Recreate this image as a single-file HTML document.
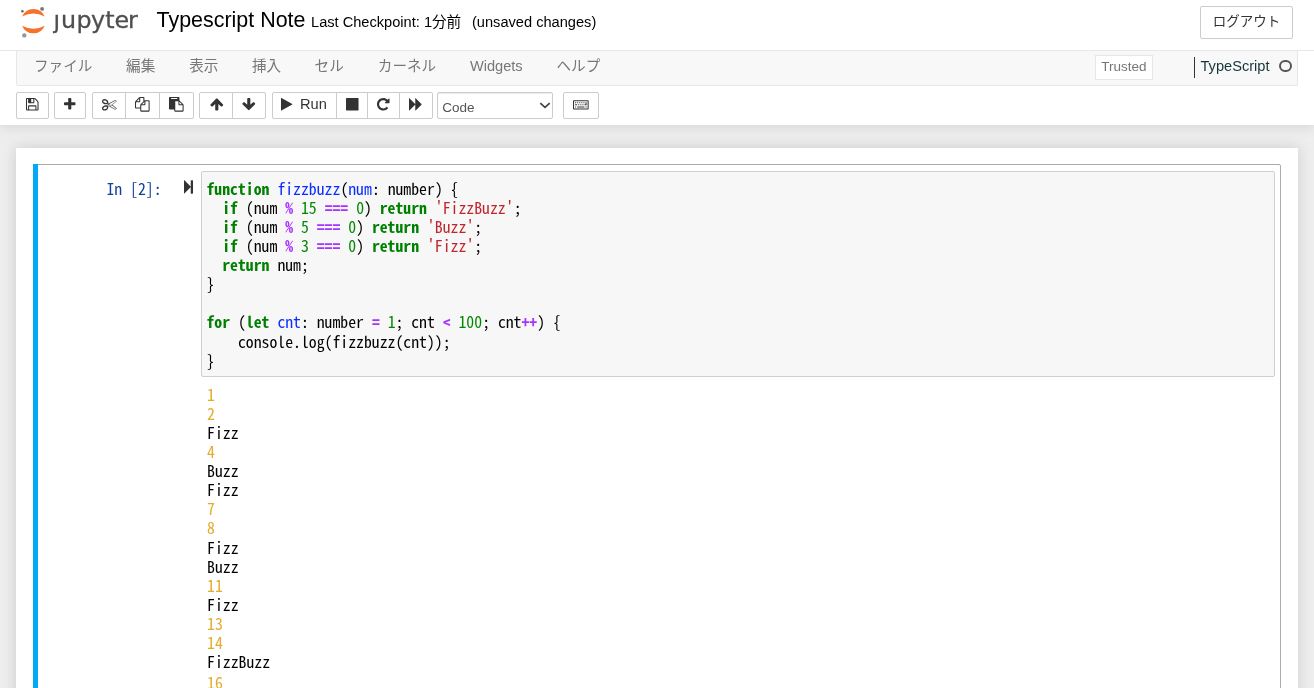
<!DOCTYPE html><html lang="ja"><head><meta charset="utf-8"><title>Typescript Note</title><style>
html,body{margin:0;padding:0}
body{width:1314px;height:688px;overflow:hidden;background:#eee;position:relative;
 font-family:"Liberation Sans","Noto Sans CJK JP",sans-serif;font-size:14.625px;color:#000}
#w{position:absolute;left:0;top:0;width:1314px;height:688px;overflow:hidden;will-change:transform}
.abs{position:absolute;white-space:nowrap}
.ic{position:absolute;display:block;overflow:visible}
#header{position:absolute;left:0;top:0;width:1314px;height:124.8px;background:#fff;
 box-shadow:0 0 13.5px 1.125px rgba(87,87,87,.2);z-index:2}
#hbar{position:absolute;left:0;top:50px;width:1314px;height:1px;background:#e7e7e7}
#menubar{position:absolute;left:16px;top:50px;width:1282px;height:36px;box-sizing:border-box;
 background:#f8f8f8;border:1px solid #e7e7e7;border-top:none;border-radius:0 0 2px 2px}
.mi{position:absolute;top:55.5px;line-height:21px;color:#777;white-space:nowrap;font-size:14.625px}
.btn{position:absolute;box-sizing:border-box;border:1px solid #ccc;background:#fff;top:92.4px;height:26.2px}
#nbc{position:absolute;left:16px;top:148px;width:1282px;height:700px;background:#fff;
 box-shadow:0 0 13.5px 1.125px rgba(87,87,87,.2)}
#cell{position:absolute;left:33px;top:164px;width:1248px;height:700px;box-sizing:border-box;
 border:1px solid #ababab;border-radius:2px;background:#fff}
#bar{position:absolute;left:33px;top:164px;width:5px;height:700px;background:#03a9f4}
.mono{font-family:"Noto Sans Mono CJK JP","Noto Sans Mono CJK SC","Noto Sans Mono CJK TC","Noto Sans Mono CJK KR","Noto Sans Mono CJK HK",monospace;font-size:15.75px;line-height:19.125px}
#inp{position:absolute;left:201px;top:171px;width:1074px;height:206px;box-sizing:border-box;border:1px solid #cfcfcf;
 border-radius:2px;background:#f7f7f7}
pre{margin:0}
#code{position:absolute;left:206.5px;top:178.6px;white-space:pre;color:#000}
#out{position:absolute;left:207.1px;top:384.6px;white-space:pre;color:#000}
.k{color:#008000;font-weight:bold}.d{color:#0a2cff}.v{color:#05a}.o{color:#a733ff;font-weight:bold}.n{color:#080}.s{color:#c0262c}
.y{color:#e2ac2c}
</style></head><body><div id="w">
<div id="nbc"></div><div id="cell"></div><div id="bar"></div>
<div class="abs mono" style="left:106.5px;top:178.6px;color:#12409c">In&nbsp;[2]:</div>
<svg class="ic" style="left:184.30px;top:178.80px" width="9.000" height="15.750" viewBox="0 -1536 1024 1792"><path fill="#333" transform="scale(1,-1)" d="M45 -115 755 595C761 601 765 607 768 614V-64C768 -99 797 -128 832 -128H960C995 -128 1024 -99 1024 -64V1344C1024 1379 995 1408 960 1408H832C797 1408 768 1379 768 1344V666C765 673 761 679 755 685L45 1395C20 1420 0 1411 0 1376V-96C0 -131 20 -140 45 -115Z"/></svg>
<div id="inp"></div>
<pre id="code" class="mono"><span class="k">function</span> <span class="d">fizzbuzz</span>(<span class="d">num</span>: <span class="v0">number</span>) {
  <span class="k">if</span> (<span class="v0">num</span> <span class="o">%</span> <span class="n">15</span> <span class="o">===</span> <span class="n">0</span>) <span class="k">return</span> <span class="s">'FizzBuzz'</span>;
  <span class="k">if</span> (<span class="v0">num</span> <span class="o">%</span> <span class="n">5</span> <span class="o">===</span> <span class="n">0</span>) <span class="k">return</span> <span class="s">'Buzz'</span>;
  <span class="k">if</span> (<span class="v0">num</span> <span class="o">%</span> <span class="n">3</span> <span class="o">===</span> <span class="n">0</span>) <span class="k">return</span> <span class="s">'Fizz'</span>;
  <span class="k">return</span> <span class="v0">num</span>;
}

<span class="k">for</span> (<span class="k">let</span> <span class="d">cnt</span>: <span class="v0">number</span> <span class="o">=</span> <span class="n">1</span>; <span class="v0">cnt</span> <span class="o">&lt;</span> <span class="n">100</span>; <span class="v0">cnt</span><span class="o">++</span>) {
    console.log(fizzbuzz(cnt));
}</pre>
<pre id="out" class="mono"><span class="y">1</span>
<span class="y">2</span>
Fizz
<span class="y">4</span>
Buzz
Fizz
<span class="y">7</span>
<span class="y">8</span>
Fizz
Buzz
<span class="y">11</span>
Fizz
<span class="y">13</span>
<span class="y">14</span>
FizzBuzz
<span style="position:relative;top:1.7px"><span class="y">16</span>
<span class="y">17</span>
Fizz
<span class="y">19</span>
Buzz
Fizz</span></pre>
<div id="header">
<svg class="ic" style="left:0;top:0" width="150" height="44" viewBox="0 0 150 44">
<path fill="#f6722b" d="M22.1 16.5 A12.2 12.2 0 0 1 44.7 16.5 A23.5 23.5 0 0 0 22.1 16.5Z"/>
<path fill="#f6722b" d="M22.1 25.7 A12.2 12.2 0 0 0 44.7 25.7 A23.5 23.5 0 0 1 22.1 25.7Z"/>
<circle cx="42.1" cy="8.9" r="1.9" fill="#767677"/><circle cx="22.4" cy="11.3" r="1.25" fill="#616262"/><circle cx="24.3" cy="35.4" r="2.2" fill="#989798"/>
<text y="28" x="53.6 60.9 76.6 91 105.2 114.4 127.9" font-family="DejaVu Sans, Liberation Sans, sans-serif" font-size="23.8" fill="#4e4e4e" stroke="#4e4e4e" stroke-width="0.3">&#x237;upyter</text>
</svg>
<div class="abs" style="left:156.6px;top:8px;font-size:21.43px;line-height:25px">Typescript Note</div>
<div class="abs" style="left:311px;top:12.5px;line-height:18px">Last Checkpoint: 1分前</div>
<div class="abs" style="left:472px;top:12.5px;line-height:18px">(unsaved changes)</div>
<div class="abs" style="left:1200px;top:6px;width:93px;height:33px;box-sizing:border-box;border:1px solid #ccc;border-radius:2px;color:#333;font-size:13.5px;line-height:29px;text-align:center">ログアウト</div>
<div id="menubar"></div><div id="hbar"></div>
<div class="mi" style="left:34.0px">ファイル</div>
<div class="mi" style="left:126.05px">編集</div>
<div class="mi" style="left:189.15px">表示</div>
<div class="mi" style="left:251.9px">挿入</div>
<div class="mi" style="left:314.6px">セル</div>
<div class="mi" style="left:377.8px">カーネル</div>
<div class="mi" style="left:469.9px">Widgets</div>
<div class="mi" style="left:556.5px">ヘルプ</div>
<div class="abs" style="left:1095px;top:55px;width:58px;height:24.5px;box-sizing:border-box;border:1px solid #e7e7e7;background:#fff;color:#777;font-size:13.5px;line-height:22px;text-align:center">Trusted</div>
<div class="abs" style="left:1194px;top:57px;width:1px;height:20.5px;background:#333"></div>
<div class="abs" style="left:1200.5px;top:55.5px;line-height:21px;color:#15353a">TypeScript</div>
<div class="abs" style="left:1278.9px;top:59.5px;width:12.9px;height:12.9px;box-sizing:border-box;border:2px solid #555;border-radius:50%"></div>
<div class="btn" style="left:16.3px;width:32.50px;border-radius:2px 2px 2px 2px"></div>
<svg class="ic" style="left:26.28px;top:96.50px" width="12.536" height="14.625" viewBox="0 -1536 1536 1792"><path fill="#333" transform="scale(1,-1)" d="M384 0V384H1152V0ZM1280 0V416C1280 469 1237 512 1184 512H352C299 512 256 469 256 416V0H128V1280H256V864C256 811 299 768 352 768H928C981 768 1024 811 1024 864V1280C1044 1280 1083 1264 1097 1250L1378 969C1391 956 1408 915 1408 896V0ZM896 928C896 911 881 896 864 896H672C655 896 640 911 640 928V1248C640 1265 655 1280 672 1280H864C881 1280 896 1265 896 1248V928ZM1536 896C1536 949 1506 1022 1468 1060L1188 1340C1150 1378 1077 1408 1024 1408H96C43 1408 0 1365 0 1312V-32C0 -85 43 -128 96 -128H1440C1493 -128 1536 -85 1536 -32Z"/></svg>
<div class="btn" style="left:54.3px;width:31.50px;border-radius:2px 2px 2px 2px"></div>
<svg class="ic" style="left:64.30px;top:96.50px" width="11.491" height="14.625" viewBox="0 -1536 1408 1792"><path fill="#333" transform="scale(1,-1)" d="M1408 800C1408 853 1365 896 1312 896H896V1312C896 1365 853 1408 800 1408H608C555 1408 512 1365 512 1312V896H96C43 896 0 853 0 800V608C0 555 43 512 96 512H512V96C512 43 555 0 608 0H800C853 0 896 43 896 96V512H1312C1365 512 1408 555 1408 608Z"/></svg>
<div class="btn" style="left:92.4px;width:33.90px;border-radius:2px 0px 0px 2px"></div>
<svg class="ic" style="left:102.04px;top:96.50px" width="14.625" height="14.625" viewBox="0 -1536 1792 1792"><path fill="#333" transform="scale(1,-1)" d="M960 640C925 640 896 611 896 576C896 541 925 512 960 512C995 512 1024 541 1024 576C1024 611 995 640 960 640ZM1260 576 1767 974C1785 987 1794 1009 1792 1030C1789 1052 1776 1071 1757 1081L1629 1145C1620 1150 1610 1152 1600 1152C1589 1152 1578 1149 1569 1144L879 757L769 823C765 825 761 827 757 828C766 859 770 892 767 925C758 1028 689 1127 579 1196C494 1250 396 1280 302 1280C212 1280 136 1253 80 1201C23 1149 -6 1073 1 995C10 893 79 794 188 724C273 670 372 640 466 640C522 640 573 651 617 671C623 662 630 655 639 649L761 576L639 503C630 497 623 490 617 481C573 501 522 512 466 512C372 512 273 482 188 428C79 358 10 259 1 157C-6 79 23 3 80 -50C136 -101 212 -128 302 -128C396 -128 494 -98 579 -44C689 26 758 124 767 227C770 260 766 293 757 324C761 325 765 327 769 329L879 395L1569 8C1578 3 1589 0 1600 0C1610 0 1620 2 1629 7L1757 71C1776 81 1789 100 1792 122C1794 143 1785 165 1767 178ZM579 836C553 812 512 800 466 800C405 800 335 820 274 859C166 927 128 1028 189 1084C215 1108 256 1120 302 1120C362 1120 433 1100 494 1061C602 993 640 892 579 836ZM494 91C433 52 362 32 302 32C256 32 215 44 189 68C128 124 166 225 274 293C335 332 405 352 466 352C512 352 553 340 579 316C640 260 602 159 494 91ZM672 704 681 713C683 715 685 716 688 719C696 726 702 734 710 742L736 768L815 721L801 713C781 701 768 680 768 657V646ZM896 480 736 384 710 410C702 418 696 426 688 434C685 436 683 437 681 440L672 448L832 544V657L1600 1088L1728 1024L992 448ZM1600 64 1018 391C1023 393 1028 394 1031 398L1208 536L1728 128Z"/></svg>
<div class="btn" style="left:125.3px;width:34.60px;border-radius:0px 0px 0px 0px"></div>
<svg class="ic" style="left:135.29px;top:96.50px" width="14.625" height="14.625" viewBox="0 -1536 1792 1792"><path fill="#333" transform="scale(1,-1)" d="M1696 1152H1280C1241 1152 1191 1135 1152 1112V1440C1152 1493 1109 1536 1056 1536H640C587 1536 513 1505 476 1468L68 1060C31 1023 0 949 0 896V224C0 171 43 128 96 128H640V-160C640 -213 683 -256 736 -256H1696C1749 -256 1792 -213 1792 -160V1056C1792 1109 1749 1152 1696 1152ZM1152 939V640H853ZM512 1323V1024H213ZM708 676C671 639 640 565 640 512V256H128V896H544C597 896 640 939 640 992V1408H1024V992ZM1664 -128H768V512H1184C1237 512 1280 555 1280 608V1024H1664Z"/></svg>
<div class="btn" style="left:158.9px;width:35.30px;border-radius:0px 2px 2px 0px"></div>
<svg class="ic" style="left:168.89px;top:96.50px" width="14.625" height="14.625" viewBox="0 -1536 1792 1792"><path fill="#333" transform="scale(1,-1)" d="M768 -128V1024H1152V608C1152 555 1195 512 1248 512H1664V-128ZM1024 1312C1024 1295 1009 1280 992 1280H288C271 1280 256 1295 256 1312V1376C256 1393 271 1408 288 1408H992C1009 1408 1024 1393 1024 1376V1312ZM1280 640V939L1579 640ZM1792 512C1792 565 1762 638 1724 676L1316 1084C1305 1095 1293 1104 1280 1112V1440C1280 1493 1237 1536 1184 1536H96C43 1536 0 1493 0 1440V96C0 43 43 0 96 0H640V-160C640 -213 683 -256 736 -256H1696C1749 -256 1792 -213 1792 -160Z"/></svg>
<div class="btn" style="left:199px;width:34.40px;border-radius:2px 0px 0px 2px"></div>
<svg class="ic" style="left:209.61px;top:96.50px" width="13.580" height="14.625" viewBox="0 -1536 1664 1792"><path fill="#333" transform="scale(1,-1)" d="M1611 565C1611 599 1597 632 1574 656L923 1307C899 1331 866 1344 832 1344C798 1344 765 1331 742 1307L91 656C67 632 53 599 53 565C53 531 67 499 91 475L166 400C189 376 222 362 256 362C290 362 323 376 346 400L640 693V-11C640 -83 700 -128 768 -128H896C964 -128 1024 -83 1024 -11V693L1318 400C1341 376 1374 362 1408 362C1442 362 1475 376 1499 400L1574 475C1597 499 1611 531 1611 565Z"/></svg>
<div class="btn" style="left:232.4px;width:33.60px;border-radius:0px 2px 2px 0px"></div>
<svg class="ic" style="left:242.41px;top:96.50px" width="13.580" height="14.625" viewBox="0 -1536 1664 1792"><path fill="#333" transform="scale(1,-1)" d="M1611 704C1611 738 1597 771 1574 795L1499 870C1475 893 1442 907 1408 907C1374 907 1341 893 1318 870L1024 576V1280C1024 1350 966 1408 896 1408H768C698 1408 640 1350 640 1280V576L346 870C323 893 290 907 256 907C222 907 189 893 165 870L91 795C67 771 53 738 53 704C53 670 67 637 91 614L742 -38C765 -61 798 -75 832 -75C866 -75 899 -61 923 -38L1574 614C1597 637 1611 670 1611 704Z"/></svg>
<div class="btn" style="left:271.6px;width:65.40px;border-radius:2px 0px 0px 2px"></div>
<svg class="ic" style="left:281.40px;top:96.50px" width="11.491" height="14.625" viewBox="0 -1536 1408 1792"><path fill="#333" transform="scale(1,-1)" d="M1384 609C1415 626 1415 654 1384 671L56 1409C25 1426 0 1411 0 1376V-96C0 -131 25 -146 56 -129Z"/></svg>
<div class="abs" style="left:300px;top:93.6px;line-height:21px;color:#333">Run</div>
<div class="btn" style="left:336px;width:31.60px;border-radius:0px 0px 0px 0px"></div>
<svg class="ic" style="left:345.98px;top:96.50px" width="12.536" height="14.625" viewBox="0 -1536 1536 1792"><path fill="#333" transform="scale(1,-1)" d="M1536 1344C1536 1379 1507 1408 1472 1408H64C29 1408 0 1379 0 1344V-64C0 -99 29 -128 64 -128H1472C1507 -128 1536 -99 1536 -64Z"/></svg>
<div class="btn" style="left:366.6px;width:33.40px;border-radius:0px 0px 0px 0px"></div>
<svg class="ic" style="left:377.48px;top:96.50px" width="12.536" height="14.625" viewBox="0 -1536 1536 1792"><path fill="#333" transform="scale(1,-1)" d="M1536 1280C1536 1306 1520 1329 1497 1339C1473 1349 1445 1344 1427 1325L1297 1196C1156 1329 965 1408 768 1408C345 1408 0 1063 0 640C0 217 345 -128 768 -128C997 -128 1213 -27 1359 149C1369 162 1369 181 1357 192L1220 330C1213 336 1204 339 1195 339C1186 338 1177 334 1172 327C1074 200 927 128 768 128C486 128 256 358 256 640C256 922 486 1152 768 1152C899 1152 1023 1102 1117 1015L979 877C960 859 955 831 965 808C975 784 998 768 1024 768H1472C1507 768 1536 797 1536 832Z"/></svg>
<div class="btn" style="left:399px;width:33.60px;border-radius:0px 2px 2px 0px"></div>
<svg class="ic" style="left:409.01px;top:96.50px" width="13.580" height="14.625" viewBox="0 -1536 1664 1792"><path fill="#333" transform="scale(1,-1)" d="M45 -115 755 595C761 601 765 607 768 614V-96C768 -131 788 -140 813 -115L1523 595C1548 620 1548 660 1523 685L813 1395C788 1420 768 1411 768 1376V666C765 673 761 679 755 685L45 1395C20 1420 0 1411 0 1376V-96C0 -131 20 -140 45 -115Z"/></svg>
<div class="btn" style="left:563px;width:35.70px;border-radius:2px 2px 2px 2px"></div>
<svg class="ic" style="left:573.02px;top:96.50px" width="15.670" height="14.625" viewBox="0 -1536 1920 1792"><path fill="#333" transform="scale(1,-1)" d="M384 368C384 377 377 384 368 384H272C263 384 256 377 256 368V272C256 263 263 256 272 256H368C377 256 384 263 384 272ZM512 624C512 633 505 640 496 640H272C263 640 256 633 256 624V528C256 519 263 512 272 512H496C505 512 512 519 512 528ZM384 880C384 889 377 896 368 896H272C263 896 256 889 256 880V784C256 775 263 768 272 768H368C377 768 384 775 384 784ZM1408 368C1408 377 1401 384 1392 384H528C519 384 512 377 512 368V272C512 263 519 256 528 256H1392C1401 256 1408 263 1408 272ZM768 624C768 633 761 640 752 640H656C647 640 640 633 640 624V528C640 519 647 512 656 512H752C761 512 768 519 768 528ZM640 880C640 889 633 896 624 896H528C519 896 512 889 512 880V784C512 775 519 768 528 768H624C633 768 640 775 640 784ZM1024 624C1024 633 1017 640 1008 640H912C903 640 896 633 896 624V528C896 519 903 512 912 512H1008C1017 512 1024 519 1024 528ZM896 880C896 889 889 896 880 896H784C775 896 768 889 768 880V784C768 775 775 768 784 768H880C889 768 896 775 896 784ZM1280 624C1280 633 1273 640 1264 640H1168C1159 640 1152 633 1152 624V528C1152 519 1159 512 1168 512H1264C1273 512 1280 519 1280 528ZM1664 368C1664 377 1657 384 1648 384H1552C1543 384 1536 377 1536 368V272C1536 263 1543 256 1552 256H1648C1657 256 1664 263 1664 272ZM1152 880C1152 889 1145 896 1136 896H1040C1031 896 1024 889 1024 880V784C1024 775 1031 768 1040 768H1136C1145 768 1152 775 1152 784ZM1408 880C1408 889 1401 896 1392 896H1296C1287 896 1280 889 1280 880V784C1280 775 1287 768 1296 768H1392C1401 768 1408 775 1408 784ZM1664 880C1664 889 1657 896 1648 896H1552C1543 896 1536 889 1536 880V640H1424C1415 640 1408 633 1408 624V528C1408 519 1415 512 1424 512H1648C1657 512 1664 519 1664 528ZM1792 128H128V1024H1792ZM1920 1024C1920 1095 1863 1152 1792 1152H128C57 1152 0 1095 0 1024V128C0 57 57 0 128 0H1792C1863 0 1920 57 1920 128Z"/></svg>
<div class="abs" style="left:437.2px;top:92.4px;width:115.8px;height:26.2px;box-sizing:border-box;border:1px solid #ccc;border-radius:2px;background:#fff;box-shadow:inset 0 1px 1px rgba(0,0,0,.075);color:#555;font-size:13.5px;line-height:26px;padding-left:4px"><span style="position:relative;top:1.4px">Code</span></div>
<svg class="ic" style="left:538.8px;top:100px" width="12" height="10" viewBox="0 0 12 10"><path d="M1.3 3.1 L6 7.3 L10.7 3.1" fill="none" stroke="#444" stroke-width="1.8"/></svg>
</div>
</div></body></html>
